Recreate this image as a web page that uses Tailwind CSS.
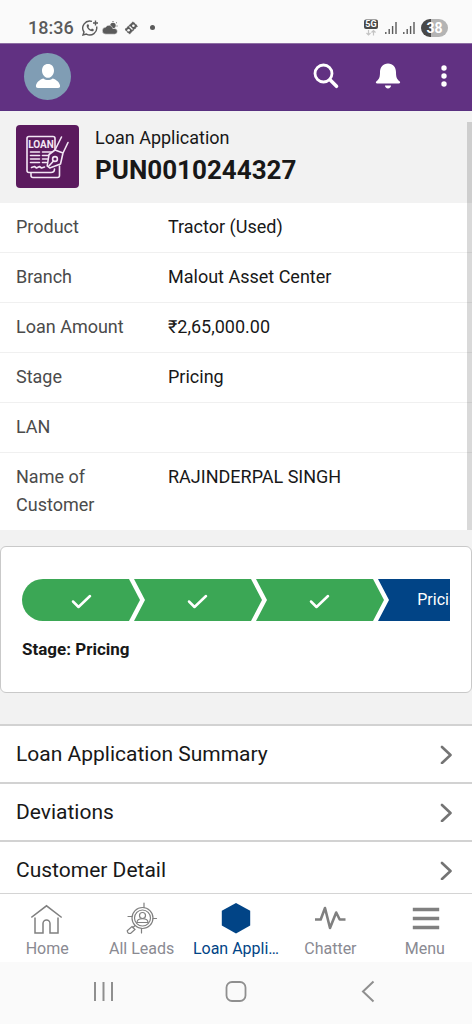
<!DOCTYPE html>
<html lang="en">
<head>
<meta charset="utf-8">
<meta name="viewport" content="width=device-width, initial-scale=1">
<title>Loan Application</title>
<script src="https://cdn.jsdelivr.net/npm/@tailwindcss/browser@4"></script>
</head>
<body class="flex h-screen flex-col overflow-hidden bg-[#f2f2f2] font-[Roboto,sans-serif] text-[#181818]">

<!-- Device status bar -->
<div class="flex shrink-0 items-center justify-between bg-[#fafafa] pt-3 pr-6 pl-7 text-[#5a5a5a]">
  <div class="flex h-[31px] items-center">
    <span class="text-lg font-medium">18:36</span>
    <svg class="ml-2 size-4" viewBox="0 0 16 16" fill="none" stroke="currentColor" stroke-width="1.4"><path d="M10 1.4A7 7 0 0 0 2 12L1 15l3.400-.9A7 7 0 0 0 14.600 6.500"/><path d="M5 4.500c-1.500 3 3 8 6.500 6.500l.3-1.500-1.800-.9-1 .8C7.700 9 6.800 8 6.400 7l.8-1-.9-1.700z" fill="currentColor" stroke="none"/><path d="M13.500.5v5M11 3h5"/></svg>
    <svg class="ml-1 size-4" viewBox="0 0 16 16" fill="currentColor"><circle cx="11" cy="5.500" r="2.700"/><path d="M11 1v1M14.800 2.500l-.8.700M15.500 6h-1" stroke="currentColor"/><path d="M4 14.200a3.500 3.500 0 0 1-.4-7 3.900 3.900 0 0 1 7.200 1.300H12.500a2.800 2.800 0 0 1 0 5.700z" stroke="#fafafa" stroke-width=".5"/></svg>
    <svg class="ml-1.5 size-3.5" viewBox="0 0 14 14" fill="currentColor"><path d="M1 8.500 9 .8l4.500 4.300-8 8z" stroke="currentColor" stroke-dasharray="1.500 1"/><path d="M5.500 5.500l3 3" stroke="#fafafa" stroke-width="1.200"/><circle cx="9.400" cy="4.700" r="1.300" fill="#fafafa"/><circle cx="4.600" cy="9.200" r="1.300" fill="#fafafa"/></svg>
    <span class="ml-3 size-[5px] rounded-full bg-[#5a5a5a]"></span>
  </div>
  <div class="flex h-[31px] items-center gap-1.5">
    <svg class="h-5 w-4" viewBox="0 0 16 20"><rect x="1" y="1.500" width="14" height="9.500" rx="2" fill="#4a4a4a"/><text x="8" y="9.300" text-anchor="middle" font-size="9" font-weight="700" fill="#fff">5G</text><path d="M5.500 12v5m-2-2 2 2 2-2M10.500 17.500v-5m-2 2 2-2 2 2" fill="none" stroke="#c4c4c4" stroke-width="1.200"/></svg>
    <svg class="h-4 w-3" viewBox="0 0 12 16" fill="none" stroke="#5a5a5a" stroke-width="1.400"><path d="M.8 12v2M4.200 9v5M7.600 6v8M11 2v12"/></svg>
    <svg class="h-4 w-3" viewBox="0 0 12 16" fill="none" stroke="#5a5a5a" stroke-width="1.400"><path d="M.8 12v2M4.200 9v5M7.600 6v8M11 2v12"/></svg>
    <span class="flex h-[18px] w-[27px] items-center justify-center rounded-full bg-linear-to-r from-[#484848] from-38% to-[#b4b4b4] to-38% text-sm font-bold text-white">38</span>
  </div>
</div>

<!-- App bar -->
<header class="flex h-[68px] shrink-0 items-center border-t border-b border-t-[#8d6da3] border-b-[#593080] bg-[#613182] pr-4 pb-0.5 pl-6">
  <button aria-label="Profile" class="flex size-[47px] items-center justify-center rounded-full bg-[#809db4]">
    <svg class="size-7" viewBox="0 0 28 28" fill="#fff"><path d="M14 2c3.600 0 6 2.700 6 6.500S17.400 15.800 14 15.800 8 12.300 8 8.500 10.400 2 14 2zM9.300 16.500c2.900 2 6.500 2 9.400 0 4.300 1.300 7 4.400 7.400 7.500 0 1.200-.7 2-2 2H3.900c-1.300 0-2-.8-2-2 .4-3.100 3.100-6.200 7.400-7.500z"/></svg>
  </button>
  <div class="ml-auto flex items-center">
    <button aria-label="Search" class="mr-[34px]"><svg class="size-7" viewBox="0 0 28 28" fill="none" stroke="#fff"><circle cx="11.500" cy="11.500" r="8.500" stroke-width="2.800"/><path d="m18 17.800 6.500 6.500" stroke-width="3.600" stroke-linecap="round"/></svg></button>
    <button aria-label="Notifications" class="mr-[30px]"><svg class="size-7" viewBox="0 0 28 28" fill="#fff"><path d="M14 1.500c5 0 8 3.700 8 8.700 0 4.800.8 6.800 3.500 9 1.200 1 .6 2.300-.7 2.300H3.200c-1.300 0-1.900-1.300-.7-2.300C5.200 17 6 15 6 10.200c0-5 3-8.700 8-8.700zM11 23.500h6c0 1.600-1.300 3-3 3s-3-1.400-3-3z"/></svg></button>
    <button aria-label="More actions"><svg class="h-7 w-6" viewBox="0 0 24 28" fill="#fff"><circle cx="12" cy="6" r="2.700"/><circle cx="12" cy="14" r="2.700"/><circle cx="12" cy="22" r="2.700"/></svg></button>
  </div>
</header>

<main class="min-h-0 flex-1 overflow-y-auto [scrollbar-width:none]">
  <div class="relative">
    <!-- Record title -->
    <div class="flex items-center gap-4 px-4 pt-[13px] pb-[15px]">
      <svg class="size-[63px] shrink-0" viewBox="0 0 63 63" fill="none" stroke="#f3e6f5" stroke-width="1.600" stroke-linejoin="round" stroke-linecap="round">
        <rect width="63" height="63" rx="4" fill="#5b1a5e" stroke="none"/>
        <path d="M39 25V13.500q0-2-2-2H13q-2 0-2 2V45.500q0 2 2 2H35q3.500 0 3.500-3.500"/>
        <path d="M15 48v2.500q0 2 2 2h24.500q2 0 2-2V41"/>
        <text x="25" y="22.500" text-anchor="middle" font-size="10" font-weight="700" fill="#f3e6f5" stroke="none">LOAN</text>
        <path d="M14.500 27h9M26.500 27h9M14.500 30.500h9M26.500 30.500h6M14.500 34h9M26.500 34h5M14.500 37.500h9M26.500 37.500h4M15.500 42.500l3-1 2 1.500 3-1.500 2 1.500 3-1"/>
        <path d="M45.500 12 39 25l-6 4.500-1.800 11.500 2.500 2 10.800-4 2.500-11 5-10.500M39 25l8 3M32.500 41.500l5-5.500"/>
        <circle cx="39" cy="34" r="2.400"/>
      </svg>
      <div>
        <p class="text-lg leading-7">Loan Application</p>
        <h1 class="text-[26px] leading-9 font-bold">PUN0010244327</h1>
      </div>
    </div>

    <!-- Key fields -->
    <dl class="divide-y divide-[#f0f0f0] bg-white text-lg leading-7 [&_dt]:w-[152px] [&_dt]:shrink-0 [&_dt]:pr-8 [&_dt]:text-[#4b4b4b]">
      <div class="flex px-4 pt-[10px] pb-[11px]"><dt>Product</dt><dd>Tractor (Used)</dd></div>
      <div class="flex px-4 pt-[10px] pb-[11px]"><dt>Branch</dt><dd>Malout Asset Center</dd></div>
      <div class="flex px-4 pt-[10px] pb-[11px]"><dt class="whitespace-nowrap">Loan Amount</dt><dd>₹2,65,000.00</dd></div>
      <div class="flex px-4 pt-[10px] pb-[11px]"><dt>Stage</dt><dd>Pricing</dd></div>
      <div class="flex px-4 pt-[10px] pb-[11px]"><dt>LAN</dt><dd></dd></div>
      <div class="flex px-4 pt-[10px] pb-[11px]"><dt>Name of Customer</dt><dd>RAJINDERPAL SINGH</dd></div>
    </dl>
    <div class="absolute top-[11px] right-0 bottom-0 w-[5px] bg-black/15"></div>
  </div>

  <!-- Stage path -->
  <section class="mt-4 rounded-md border border-[#c9c9c9] bg-white px-[21px] pt-8 pb-[31px]">
    <ol class="flex h-[42px] overflow-hidden text-base text-white">
      <li class="flex w-[118px] shrink-0 items-center justify-center rounded-l-full bg-[#3ba755] [clip-path:polygon(0_0,calc(100%-11px)_0,100%_50%,calc(100%-11px)_100%,0_100%)]">
        <svg class="size-6" viewBox="0 0 24 24" fill="none" stroke="#fff" stroke-width="2.500" stroke-linecap="round" stroke-linejoin="round"><path d="m4 13.500 5.500 5.500L21 8"/></svg>
      </li>
      <li class="-ml-1.5 flex w-32 shrink-0 items-center justify-center bg-[#3ba755] [clip-path:polygon(0_0,calc(100%-11px)_0,100%_50%,calc(100%-11px)_100%,0_100%,11px_50%)]">
        <svg class="size-6" viewBox="0 0 24 24" fill="none" stroke="#fff" stroke-width="2.500" stroke-linecap="round" stroke-linejoin="round"><path d="m3 13.500 5.500 5.500L20 8"/></svg>
      </li>
      <li class="-ml-1.5 flex w-32 shrink-0 items-center justify-center bg-[#3ba755] [clip-path:polygon(0_0,calc(100%-11px)_0,100%_50%,calc(100%-11px)_100%,0_100%,11px_50%)]">
        <svg class="size-6" viewBox="0 0 24 24" fill="none" stroke="#fff" stroke-width="2.500" stroke-linecap="round" stroke-linejoin="round"><path d="m3 13.500 5.500 5.500L20 8"/></svg>
      </li>
      <li aria-current="step" class="-ml-1.5 flex w-32 shrink-0 items-center justify-center bg-[#014486] [clip-path:polygon(0_0,calc(100%-11px)_0,100%_50%,calc(100%-11px)_100%,0_100%,11px_50%)]">Pricing</li>
    </ol>
    <p class="mt-4 text-[17px] leading-6 font-bold">Stage: Pricing</p>
  </section>

  <!-- Related sections -->
  <nav aria-label="Sections" class="mt-[31px] text-[21px] leading-7">
    <a href="#summary" class="flex items-center justify-between border-t-2 border-[#d2d2d2] bg-white px-4 py-[14px]">Loan Application Summary
      <svg class="size-5" viewBox="0 0 20 20" fill="none" stroke="#747474" stroke-width="2.600" stroke-linecap="round" stroke-linejoin="round"><path d="m6 3 8.500 8L6 19"/></svg></a>
    <a href="#deviations" class="flex items-center justify-between border-t-2 border-[#d2d2d2] bg-white px-4 py-[14px]">Deviations
      <svg class="size-5" viewBox="0 0 20 20" fill="none" stroke="#747474" stroke-width="2.600" stroke-linecap="round" stroke-linejoin="round"><path d="m6 3 8.500 8L6 19"/></svg></a>
    <a href="#customer" class="flex items-center justify-between border-t-2 border-[#d2d2d2] bg-white px-4 py-[14px]">Customer Detail
      <svg class="size-5" viewBox="0 0 20 20" fill="none" stroke="#747474" stroke-width="2.600" stroke-linecap="round" stroke-linejoin="round"><path d="m6 3 8.500 8L6 19"/></svg></a>
  </nav>
</main>

<!-- Tab bar -->
<nav aria-label="Main" class="grid shrink-0 grid-cols-5 border-t border-[#d4d4d4] bg-white pt-2 pb-px text-base leading-6 text-[#8a8a92]">
  <a href="#home" class="flex min-w-0 flex-col items-center gap-[3px]">
    <svg class="size-8" viewBox="0 0 32 32" fill="none" stroke="#808080" stroke-width="1.500"><path d="M.3 15.500 15.500 3.800l15.200 11.700M4 15.500V31h8v-9.500a3.500 3.500 0 0 1 7 0V31h8V15.500"/></svg>
    Home</a>
  <a href="#leads" class="flex min-w-0 flex-col items-center gap-[3px]">
    <svg class="size-8" viewBox="0 0 32 32" fill="none" stroke="#808080" stroke-width="1.200" stroke-linecap="round"><circle cx="16.500" cy="16" r="10.500"/><circle cx="16.500" cy="16" r="8"/><circle cx="16.500" cy="13.500" r="3"/><path d="M11 20.500c0-5 11-5 11 0zM18 1v4.500M15.500 26.500V31M2 14.500h4M27 16.500h3.500M9 23.500l-2 2"/><path d="m6 24.500 3 3-4.500 4q-3 .3-3.300-2.700z"/></svg>
    All Leads</a>
  <a href="#loans" aria-current="page" class="flex min-w-0 flex-col items-center gap-[3px] text-[#014486]">
    <svg class="size-8" viewBox="0 0 32 32" fill="#014486"><path d="m16 1 14.200 7.800v14.800L16 31.500 1.800 23.600V8.800z"/></svg>
    <span class="whitespace-nowrap">Loan Appli…</span></a>
  <a href="#chatter" class="flex min-w-0 flex-col items-center gap-[3px]">
    <svg class="size-8" viewBox="0 0 32 32" fill="none" stroke="#808080" stroke-width="2.600" stroke-linejoin="round"><path d="M1 17.500h5.700L11 6l5 20 6.200-15.500 3.500 7h5.800"/></svg>
    Chatter</a>
  <a href="#menu" class="flex min-w-0 flex-col items-center gap-[3px]">
    <svg class="size-8" viewBox="0 0 32 32" fill="none" stroke="#808080" stroke-width="3.400"><path d="M3.800 7.500h26.400M3.800 16.500h26.400M3.800 25.500h26.400"/></svg>
    Menu</a>
</nav>

<!-- Device navigation -->
<div class="flex h-[62px] shrink-0 items-center justify-center gap-[108px] bg-[#fafafa] pb-1 text-[#8f8f8f]">
  <button aria-label="Recent apps"><svg class="size-6" viewBox="0 0 24 24" fill="none" stroke="currentColor" stroke-width="2"><path d="M3 3v19M11.500 3v19M20 3v19"/></svg></button>
  <button aria-label="Home screen"><svg class="size-6" viewBox="0 0 24 24" fill="none" stroke="currentColor" stroke-width="1.800"><rect x="2.500" y="3" width="19" height="19" rx="5.500"/></svg></button>
  <button aria-label="Back"><svg class="size-6" viewBox="0 0 24 24" fill="none" stroke="currentColor" stroke-width="2"><path d="M17.500 2.500 7 12.500l10.500 10"/></svg></button>
</div>
</body>
</html>
